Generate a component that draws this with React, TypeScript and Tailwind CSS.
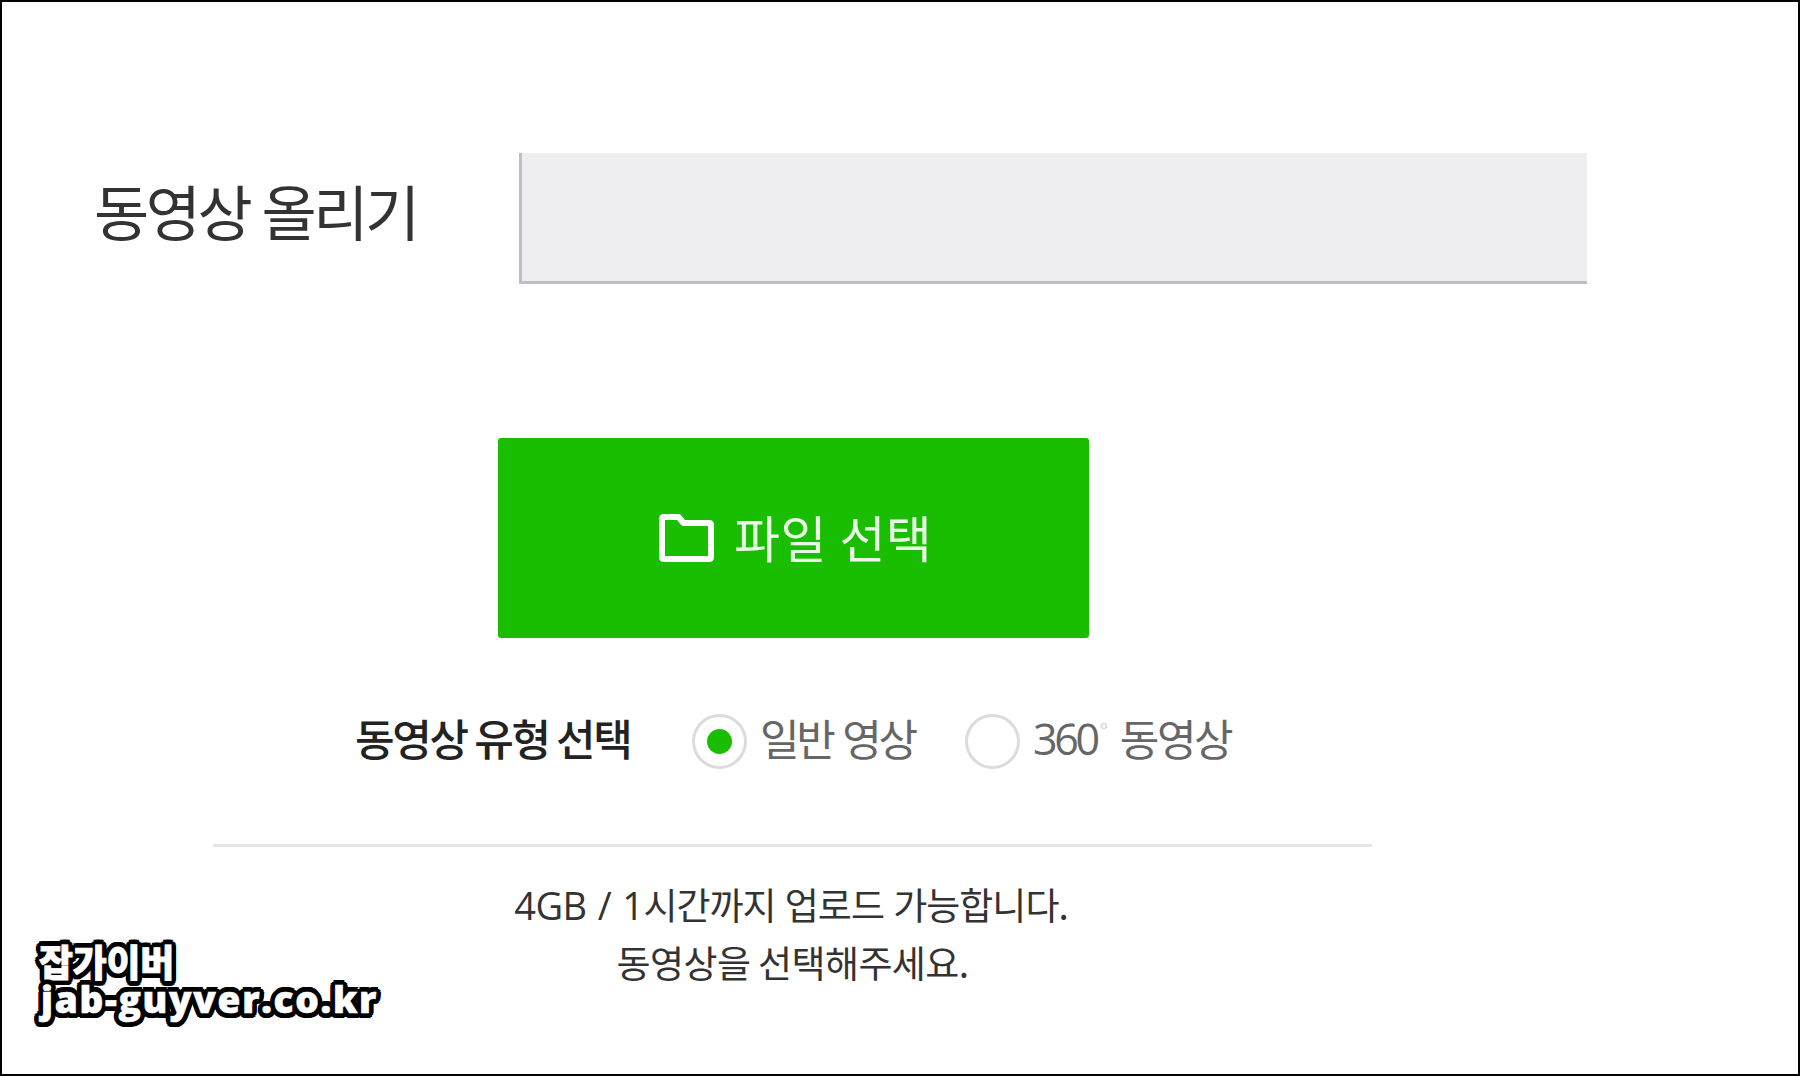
import React from 'react';

const TitleRow: React.FC = () => {
  return (
    <div className="flex items-start pt-[151px] pl-[92px]">
      <h1 className="mt-[22px] w-[425px] text-[60px] leading-[70px] tracking-[-3.4px] whitespace-nowrap text-[#333] [word-spacing:2px]">동영상 올리기</h1>
      <div className="h-[131px] w-[1068px] border-b-3 border-l-3 border-[#bbc0c6] bg-[#eeeef0]"></div>
    </div>
  );
};

const FileButton: React.FC = () => {
  return (
    <button className="mt-[154px] ml-[496px] flex h-[200px] w-[591px] items-center rounded-[3px] bg-[#1abe00] pl-[161px]">
      <svg width="55" height="48" viewBox="0 0 55 48" fill="none" className="shrink-0">
        <path d="M5 3H19.500L24.500 9H50Q52 9 52 11V43Q52 45 50 45H5Q3 45 3 43V5Q3 3 5 3Z" stroke="#fff" strokeWidth="6" strokeLinejoin="round" />
      </svg>
      <span className="ml-[20px] pb-[4px] text-[50px] leading-[60px] font-normal tracking-[0.4px] whitespace-nowrap text-[#e8f8e5] [word-spacing:1px]">파일 선택</span>
    </button>
  );
};

const Radio: React.FC<{ checked?: boolean }> = ({ checked }) => {
  return (
    <span className="flex size-[55px] shrink-0 items-center justify-center rounded-full border-3 border-[#dcdcdc]">
      {checked && <span className="size-[25px] rounded-full bg-[#1abe00]"></span>}
    </span>
  );
};

const TypeRow: React.FC = () => {
  return (
    <div className="mt-[75px] ml-[353px] flex h-[56px] items-center text-[43px] leading-[48px] tracking-[-3px] whitespace-nowrap text-[#666]">
      <strong className="w-[337px] pb-[9px] font-medium tracking-[-2.3px] text-[#222]">동영상 유형 선택</strong>
      <Radio checked />
      <span className="ml-[13px] w-[205px] pb-[9px] tracking-[-3.2px] [word-spacing:3px]">일반 영상</span>
      <Radio />
      <span className="ml-[13px] flex pb-[7px]">
        <span className="pt-[2px] font-['Open_Sans'] tracking-[-3.3px]">360</span>
        <span className="ml-[3px] w-[14px] text-[22px] leading-[34px] text-[#ccd0e0]">°</span>
        <span className="ml-[6px] tracking-[-2.5px]">동영상</span>
      </span>
    </div>
  );
};

const Notice: React.FC = () => {
  return (
    <div className="mt-[75px] ml-[211px] w-[1159px] border-t-3 border-[#e6e6e6] pt-[29px] text-center text-[37px] leading-[57px] text-[#333]">
      <p className="pr-[3px] tracking-[-1px] [word-spacing:2px]">
        <span className="font-['Open_Sans'] text-[38px] tracking-[-0.6px]">4GB / 1</span>시간까지 업로드 가능합니다.
      </p>
      <p className="tracking-[-0.6px]">동영상을 선택해주세요.</p>
    </div>
  );
};

// blog signature, sits over the bottom left corner
// the outline is a ring of shadows so the letters keep their full weight
const Signature: React.FC = () => {
  return (
    <div className="absolute bottom-[57px] left-[37px] text-[37px] whitespace-nowrap text-white [text-shadow:5px_0_#000,4.6px_1.9px_#000,3.5px_3.5px_#000,1.9px_4.6px_#000,0_5px_#000,-1.9px_4.6px_#000,-3.5px_3.5px_#000,-4.6px_1.9px_#000,-5px_0_#000,-4.6px_-1.9px_#000,-3.5px_-3.5px_#000,-1.9px_-4.6px_#000,0_-5px_#000,1.9px_-4.6px_#000,3.5px_-3.5px_#000,4.6px_-1.9px_#000,2px_0_#000,-2px_0_#000,0_2px_#000,0_-2px_#000]">
      <p className="leading-[38px] font-black tracking-[-0.3px] [-webkit-text-stroke:0.8px_#fff]">잡가이버</p>
      <p className="pl-[2px] font-['Open_Sans'] leading-[37px] font-extrabold tracking-[1.7px] [-webkit-text-stroke:0.6px_#fff]">jab-guyver.co.kr</p>
    </div>
  );
};

const App: React.FC = () => {
  return (
    <div className="relative h-[1076px] w-[1800px] overflow-hidden border-2 border-black bg-white font-['Noto_Sans_CJK_KR',sans-serif]">
      <TitleRow />
      <FileButton />
      <TypeRow />
      <Notice />
      <Signature />
    </div>
  );
};

export default App;
